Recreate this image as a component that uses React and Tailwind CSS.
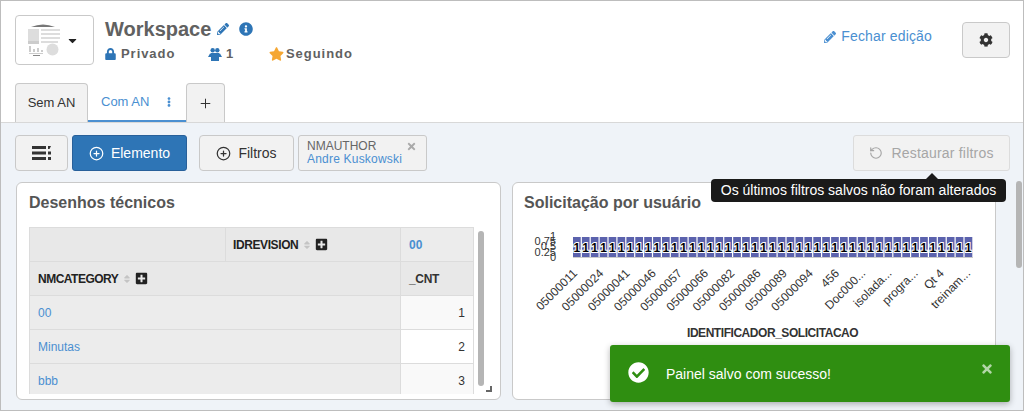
import React from 'react';
import {
    FaCaretDown,
    FaCheckCircle,
    FaCog,
    FaEllipsisV,
    FaInfoCircle,
    FaLock,
    FaPencilAlt,
    FaPlusSquare,
    FaSort,
    FaStar,
    FaTimes
} from 'react-icons/fa';
import { CirclePlus, Plus, RotateCcw } from 'lucide-react';

const font = { fontFamily: '"Liberation Sans", Arial, sans-serif' };

const xLabels = [
    '05000011', '05000024', '05000041', '05000046', '05000057', '05000066', '05000082',
    '05000086', '05000089', '05000094', '456', 'Doc000...', 'isolada...', 'progra...', 'Qt 4', 'treinam...'
];

const yLabels = ['1', '0.75', '0.5', '0.25', '0'];

const rows = [
    { name: '00', count: 1, stripe: 'bg-[#f9f9f9]' },
    { name: 'Minutas', count: 2, stripe: 'bg-white' },
    { name: 'bbb', count: 3, stripe: 'bg-[#f9f9f9]' }
];

const LogoMark = () => (
    <svg width="34" height="34" viewBox="0 0 34 34">
        <path d="M4 4 Q16 -1 28 4 Z" fill="#777" />
        <path d="M1 6 H12 V18 H1 Z" fill="#ddd" />
        <path d="M1 18 H12 V21 H1 Z" fill="#ccc" />
        <path d="M14 6 H33 V8 H14 Z M14 10 H33 V12 H14 Z M14 14 H33 V16 H14 Z M14 18 H31 V20 H14 Z" fill="#ddd" />
        <circle cx="25.5" cy="26.5" r="6" fill="#ddd" />
        <path d="M2 23 H4 V29 H2 Z M6 26 H8 V29 H6 Z M10 25 H12 V29 H10 Z M14 27 H16 V29 H14 Z M2 30 H16 V31 H2 Z" fill="#ccc" />
        <path d="M6 32 H13 V33 H6 Z" fill="#888" />
    </svg>
);

const MenuMark = () => (
    <svg width="19" height="14" viewBox="0 0 19 14" fill="#333">
        <path d="M0 0 H14 V3 H0 Z M0 5.5 H14 V8.5 H0 Z M0 11 H14 V14 H0 Z" />
        <path d="M16 0 H19 L17.5 3 H16 Z M16 5.5 H19 V8.5 H16 Z M16 11 H19 V14 H16 Z" />
    </svg>
);

const UsersMark = () => (
    <svg width="14" height="13" viewBox="0 0 14 13" fill="#2e75b6">
        <circle cx="4.7" cy="2.3" r="2.2" />
        <circle cx="9.3" cy="2.3" r="2.2" />
        <path d="M3 5 H11 V13 H3 Z M2 5.5 H3 V9 H0 Z M11 5.5 H12 L14 9 H11 Z" />
    </svg>
);

const Chart = () => (
    <svg width="472" height="93" viewBox="0 0 472 93" className="block overflow-visible">
        <g fontSize="11" fill="#333" textAnchor="end" style={font}>
            {yLabels.map((label, i) => (
                <text key={label} x="43" y={7 + i * 5.2}>{label}</text>
            ))}
        </g>
        {Array.from({ length: 45 }, (_, i) => (
            <g key={i}>
                <rect x={60 + i * 8.9} y="4" width="7.7" height="20" fill="#5b62ad" />
                <text x={63.8 + i * 8.9} y="18.5" fontSize="12" fontWeight="700" textAnchor="middle" fill="#000" stroke="#fff" strokeWidth="2" paintOrder="stroke" style={font}>1</text>
            </g>
        ))}
        <path d="M60 24.5 H460" stroke="#ccc" />
        {xLabels.map((label, i) => {
            const x = 65 + i * 26.2;
            return (
                <text key={label} transform={`translate(${x} 41) rotate(-45)`} fontSize="12" textAnchor="end" fill="#333" style={font}>{label}</text>
            );
        })}
    </svg>
);

const App = () => {
    return (
        <div style={font} className="relative flex h-[411px] w-[1024px] flex-col overflow-hidden border border-[#bdbdbd] bg-white text-[#333]">
            {/* Cabecalho */}
            <header className="flex h-[122px] shrink-0 flex-col border-b border-[#d8d8d8] px-[14px] pt-[14px]">
                <div className="flex h-[51px] items-start">
                    <button className="flex h-[50px] w-[79px] items-center gap-[5px] rounded-[4px] border border-[#c9c9c9] pl-[11px]">
                        <LogoMark />
                        <FaCaretDown className="h-[13px] w-[13px] text-[#222]" />
                    </button>
                    <div className="ml-[11px]">
                        <div className="flex h-[27px] items-center text-[#616161]">
                            <span className="text-[20px] font-bold">Workspace</span>
                            <FaPencilAlt className="ml-[6px] h-[12px] w-[12px] text-[#2e75b6]" />
                            <FaInfoCircle className="ml-[10px] h-[14px] w-[14px] text-[#2e75b6]" />
                        </div>
                        <div className="mt-[1px] flex h-[22px] items-center text-[13px] font-bold tracking-[0.95px] text-[#616161]">
                            <FaLock className="h-[12px] w-[11px] text-[#2e75b6]" />
                            <span className="ml-[5px] w-[87px]">Privado</span>
                            <UsersMark />
                            <span className="ml-[4px] w-[43px]">1</span>
                            <FaStar className="h-[14px] w-[15px] text-[#f5a733]" />
                            <span className="ml-[2px]">Seguindo</span>
                        </div>
                    </div>
                    <div className="ml-auto mr-[30px] mt-[11px] flex items-center gap-[5px] text-[14px] tracking-[0.15px] text-[#4a8fd1]">
                        <FaPencilAlt className="h-[12px] w-[12px]" />
                        Fechar edição
                    </div>
                    <button className="mr-[-1px] mt-[7px] flex h-[36px] w-[48px] items-center justify-center rounded-[4px] border border-[#c9c9c9] bg-[#f2f2f2]">
                        <FaCog className="h-[14px] w-[14px] text-[#333]" />
                    </button>
                </div>
                <div className="mt-[17px] flex h-[39px] text-[13px]">
                    <div className="flex w-[73px] items-center justify-center rounded-t-[4px] border border-b-0 border-[#c9c9c9] bg-[#f2f2f2] text-[#333]">Sem AN</div>
                    <div className="flex w-[98px] items-center border-b-[2px] border-[#4a8fd1] pl-[13px] text-[#4a8fd1]">
                        Com AN
                        <FaEllipsisV className="ml-[15px] h-[10px] w-[10px]" />
                    </div>
                    <div className="flex w-[39px] items-center justify-center rounded-t-[4px] border border-b-0 border-[#c9c9c9] bg-[#f2f2f2]">
                        <Plus size={15} strokeWidth={1.6} className="text-[#333]" />
                    </div>
                </div>
            </header>

            {/* Area do painel */}
            <main className="flex min-h-0 flex-1 flex-col bg-[#eff3f8] pl-[14px] pr-[1px] pt-[12px]">
                <div className="mr-[12px] flex h-[36px] shrink-0 items-stretch text-[14px]">
                    <button className="flex w-[53px] items-center justify-center rounded-[4px] border border-[#c9c9c9] bg-[#f2f2f2]">
                        <MenuMark />
                    </button>
                    <button className="ml-[4px] flex w-[115px] items-center justify-center gap-[7px] rounded-[3px] border border-[#28609a] bg-[#2e75b6] text-white">
                        <CirclePlus size={15} strokeWidth={2} />
                        Elemento
                    </button>
                    <button className="ml-[12px] flex w-[95px] items-center justify-center gap-[7px] rounded-[4px] border border-[#c9c9c9] bg-[#f2f2f2] text-[#333]">
                        <CirclePlus size={15} strokeWidth={2} />
                        Filtros
                    </button>
                    <div className="relative ml-[4px] flex w-[129px] flex-col justify-center rounded-[3px] border border-[#c9c9c9] bg-[#f2f2f2] pl-[8px] text-[12px] leading-[13px]">
                        <span className="text-[#666]">NMAUTHOR</span>
                        <span className="tracking-[0.2px] text-[#4a8fd1]">Andre Kuskowski</span>
                        <FaTimes className="absolute right-[9px] top-[5px] h-[11px] w-[11px] text-[#aaa]" />
                    </div>
                    <button className="ml-auto flex w-[157px] items-center justify-center gap-[8px] rounded-[3px] border border-[#dcdcdc] bg-[#f2f2f2] tracking-[0.2px] text-[#a6a6a6]">
                        <RotateCcw size={14} strokeWidth={2} />
                        Restaurar filtros
                    </button>
                </div>

                <div className="mt-[11px] flex min-h-0 flex-1 pb-[10px] pl-[1px]">
                    {/* Desenhos tecnicos */}
                    <section className="relative w-[485px] shrink-0 overflow-hidden rounded-[6px] border border-[#c9c9c9] bg-white pl-[12px]">
                        <h2 className="mt-[10px] text-[16px] font-bold leading-[20px] text-[#555]">Desenhos técnicos</h2>
                        <div className="mt-[14px] flex">
                            <div className="h-[167px] w-[445px] overflow-hidden">
                                <table className="w-[445px] table-fixed border-collapse text-[12px]">
                                    <tbody>
                                        <tr className="h-[34px]">
                                            <td className="w-[196px] border border-[#dcdcdc] bg-[#e8e8e8]"></td>
                                            <td className="w-[175px] border border-[#dcdcdc] bg-[#e8e8e8] pl-[7px] font-bold tracking-[-0.4px] text-[#222]">
                                                <span className="flex items-center">
                                                    IDREVISION
                                                    <FaSort className="ml-[4px] h-[10px] w-[10px] text-[#c4c4c4]" />
                                                    <FaPlusSquare className="ml-[3px] h-[13px] w-[13px] text-[#222]" />
                                                </span>
                                            </td>
                                            <td className="border border-[#dcdcdc] bg-[#ececec] pl-[8px] font-bold text-[#4a8fd1]">00</td>
                                        </tr>
                                        <tr className="h-[34px]">
                                            <td colSpan="2" className="border border-[#dcdcdc] bg-[#e8e8e8] pl-[8px] font-bold tracking-[-0.5px] text-[#222]">
                                                <span className="flex items-center">
                                                    NMCATEGORY
                                                    <FaSort className="ml-[4px] h-[10px] w-[10px] text-[#c4c4c4]" />
                                                    <FaPlusSquare className="ml-[3px] h-[13px] w-[13px] text-[#222]" />
                                                </span>
                                            </td>
                                            <td className="border border-[#dcdcdc] bg-[#e8e8e8] pl-[8px] font-bold tracking-[-0.3px] text-[#333]">_CNT</td>
                                        </tr>
                                        {rows.map((row) => (
                                            <tr key={row.name} className="h-[34px]">
                                                <td colSpan="2" className="border border-[#dcdcdc] bg-[#ececec] pl-[8px] text-[#4a8fd1]">{row.name}</td>
                                                <td className={`border border-[#dcdcdc] pr-[8px] text-right text-[#333] ${row.stripe}`}>{row.count}</td>
                                            </tr>
                                        ))}
                                    </tbody>
                                </table>
                            </div>
                            <div className="ml-[4px] mt-[4px] h-[155px] w-[6px] rounded-full bg-[#b5b5b5]"></div>
                        </div>
                        <svg width="6" height="6" viewBox="0 0 6 6" className="absolute bottom-[7px] right-[8px]">
                            <path d="M4 0 H6 V6 H0 V4 H4 Z" fill="#666" />
                        </svg>
                    </section>

                    {/* Solicitacao por usuario */}
                    <section className="ml-[11px] w-[484px] shrink-0 overflow-hidden rounded-[6px] border border-[#c9c9c9] bg-white pl-[11px]">
                        <h2 className="mt-[10px] text-[16px] font-bold leading-[20px] text-[#555]">Solicitação por usuário</h2>
                        <div className="ml-[-11px] mt-[20px]">
                            <Chart />
                            <p className="ml-[174px] text-[12px] font-bold leading-[14px] tracking-[-0.45px] text-[#333]">IDENTIFICADOR_SOLICITACAO</p>
                        </div>
                    </section>
                    <div className="ml-[20px] mt-[-1px] h-[87px] w-[6px] shrink-0 rounded-full bg-[#b5b5b5]"></div>
                </div>
            </main>

            {/* Tooltip do botao restaurar */}
            <div className="absolute left-[710px] top-[178px] flex h-[23px] w-[295px] items-center justify-center rounded-[4px] bg-[#1a1a1a] text-[14px] text-white">
                Os últimos filtros salvos não foram alterados
                <span className="absolute left-[215px] top-[-6px] h-0 w-0 border-x-[6px] border-b-[6px] border-x-transparent border-b-[#1a1a1a]"></span>
            </div>

            {/* Toast */}
            <div className="absolute left-[609px] top-[344px] flex h-[57px] w-[400px] items-center rounded-[3px] bg-[#2f8e11] pl-[18px] text-[14px] text-white shadow-[0_2px_6px_rgba(0,0,0,0.3)]">
                <FaCheckCircle className="mt-[-2px] h-[21px] w-[21px]" />
                <span className="ml-[17px] mt-[2px]">Painel salvo com sucesso!</span>
                <FaTimes className="absolute right-[16px] top-[17px] h-[14px] w-[14px] text-[#b3d6a8]" />
            </div>
        </div>
    );
};

export default App;
